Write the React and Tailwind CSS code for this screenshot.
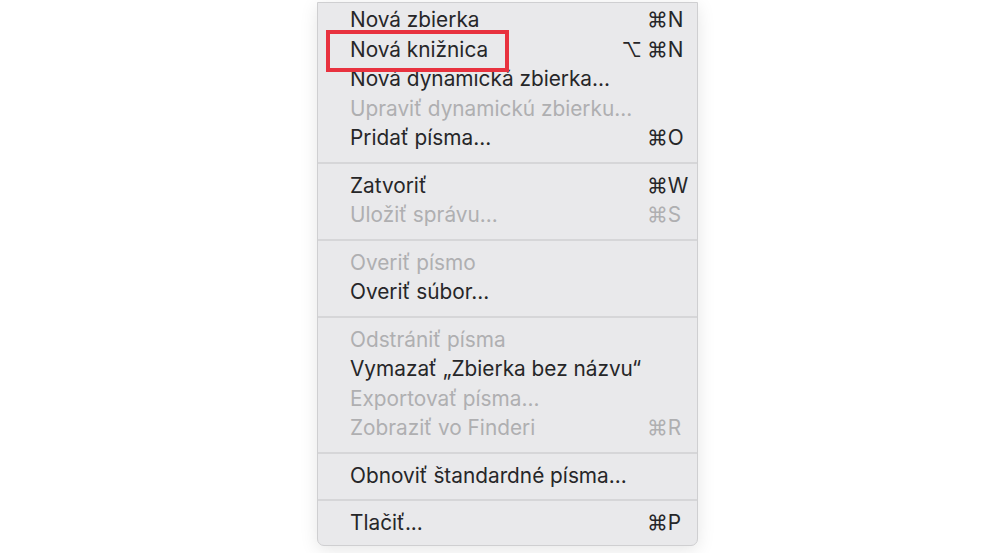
import React from "react";

const sections = [
  [
    { t: "Nová zbierka", k: "N" },
    { t: "Nová knižnica", m: "⌥", k: "N" },
    { t: "Nová dynamická zbierka..." },
    { t: "Upraviť dynamickú zbierku...", d: true },
    { t: "Pridať písma...", k: "O" },
  ],
  [
    { t: "Zatvoriť", k: "W" },
    { t: "Uložiť správu...", k: "S", d: true },
  ],
  [
    { t: "Overiť písmo", d: true },
    { t: "Overiť súbor..." },
  ],
  [
    { t: "Odstrániť písma", d: true },
    { t: "Vymazať „Zbierka bez názvu“" },
    { t: "Exportovať písma...", d: true },
    { t: "Zobraziť vo Finderi", k: "R", d: true },
  ],
  [{ t: "Obnoviť štandardné písma..." }],
  [{ t: "Tlačiť...", k: "P" }],
];

function Row({ item }) {
  const color = item.d ? "text-[#afafb1]" : "text-[#262628]";
  return (
    <div className={`flex items-center h-[29.5px] pl-[32px] pr-[8px] ${color}`}>
      <span className="flex-1 whitespace-nowrap">{item.t}</span>
      {item.k && (
        <span className="flex items-center">
          <span className="w-[30px] text-right pr-[5px] text-[20px]">{item.m || ""}</span>
          <span className="w-[42px] text-left whitespace-nowrap">⌘{item.k}</span>
        </span>
      )}
    </div>
  );
}

export default function App() {
  return (
    <div
      className="relative w-[988px] h-[553px] bg-white overflow-hidden pl-[317px] pt-[2px]"
      style={{ fontFamily: "Inter, 'DejaVu Sans', sans-serif" }}
    >
      <div className="w-[381px] bg-[#e9e9eb] border border-[#cfcfd1] rounded-b-[7px] shadow-[0_4px_18px_rgba(0,0,0,0.10)] pt-[3px] pb-[6px] text-[20.8px] leading-none">
        {sections.map((sec, i) => (
          <div key={i}>
            {i > 0 && <div className="my-[8px] h-[2px] bg-[#d6d6d8]" />}
            {sec.map((item, j) => (
              <Row key={j} item={item} />
            ))}
          </div>
        ))}
      </div>
      <div className="absolute left-[326px] top-[30px] w-[183px] h-[42px] border-[4px] border-[#e8323f]" />
    </div>
  );
}
